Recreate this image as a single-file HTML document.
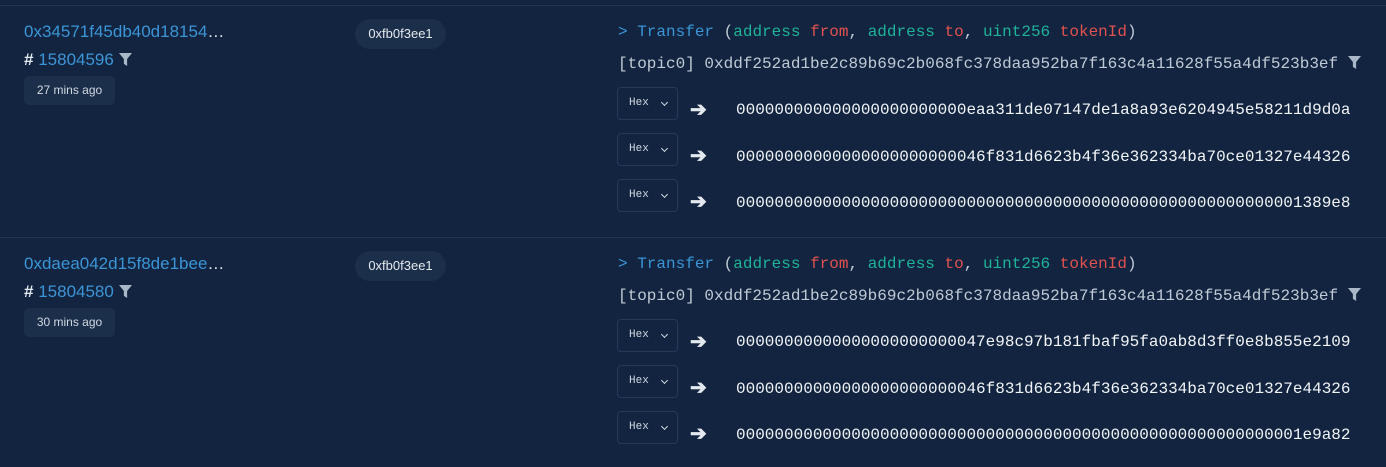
<!DOCTYPE html>
<html><head><meta charset="utf-8"><style>
*{margin:0;padding:0;box-sizing:border-box}
body{width:1386px;height:467px;background:#12243f;overflow:hidden;position:relative;font-family:"Liberation Sans",sans-serif;color:#e4e9ef}
.sep{position:absolute;left:0;width:1386px;height:1px;background:#1f3553}
.abs{position:absolute;white-space:nowrap}
.link{color:#3b95d6;font-size:17px}
.pill{position:absolute;background:#1c2f4a;border-radius:15px;font-size:13px;color:#e4e9ef;height:30px;line-height:30px;text-align:center}
.ts{position:absolute;background:#1c2f4a;border-radius:5px;font-size:12px;color:#d0d8e2;width:91px;height:29px;line-height:29px;text-align:center}
.mono{font-family:"Liberation Mono",monospace;font-size:16px}
.hexb{position:absolute;left:617px;width:61px;height:33px;border:1px solid #25395a;border-radius:4px;font-family:"Liberation Mono",monospace;font-size:11px;color:#d0d8e2;line-height:31px;padding-left:11px}
.hexb:after{content:"";position:absolute;left:44px;top:12px;width:4px;height:4px;border-right:1.5px solid #d0d8e2;border-bottom:1.5px solid #d0d8e2;transform:rotate(45deg)}
.c1{color:#3b95d6}.c2{color:#1fb39a}.c3{color:#e0524f}.c0{color:#c0cad6}
.d{color:#f2f5f8}
</style></head><body>
<div class="sep" style="top:5px"></div>
<div class="sep" style="top:237px"></div>

<div class="abs link" style="left:24px;top:22px">0x34571f45db40d18154<span style="color:#e4e9ef">…</span></div>
<div class="abs" style="left:24px;top:50px;font-size:17px"><b>#</b> <span class="link">15804596</span> <svg width="13" height="13" viewBox="0 0 12 12" style="vertical-align:-1px"><path d="M0 0H12L7.5 5.5V12L4.5 10V5.5Z" fill="#a9b7c8"/></svg></div>
<div class="ts" style="left:24px;top:76px">27 mins ago</div>
<div class="pill" style="left:355px;top:19px;width:91px">0xfb0f3ee1</div>
<div class="abs mono" style="left:618px;top:23px"><span class="c1">&gt; Transfer</span> <span class="c0">(</span><span class="c2">address</span> <span class="c3">from</span><span class="c0">,</span> <span class="c2">address</span> <span class="c3">to</span><span class="c0">,</span> <span class="c2">uint256</span> <span class="c3">tokenId</span><span class="c0">)</span></div>
<div class="abs mono c0" style="left:618px;top:55px">[topic0] 0xddf252ad1be2c89b69c2b068fc378daa952ba7f163c4a11628f55a4df523b3ef <svg width="13" height="13" viewBox="0 0 12 12" style="vertical-align:-1px"><path d="M0 0H12L7.5 5.5V12L4.5 10V5.5Z" fill="#a9b7c8"/></svg></div>
<div class="hexb" style="top:87px">Hex</div>
<div class="hexb" style="top:133px">Hex</div>
<div class="hexb" style="top:179px">Hex</div>
<div class="abs" style="left:690px;top:97px;font-size:20px;font-weight:bold">➔</div>
<div class="abs" style="left:690px;top:143px;font-size:20px;font-weight:bold">➔</div>
<div class="abs" style="left:690px;top:189px;font-size:20px;font-weight:bold">➔</div>
<div class="abs mono d" style="left:736px;top:101px">000000000000000000000000eaa311de07147de1a8a93e6204945e58211d9d0a</div>
<div class="abs mono d" style="left:736px;top:148px">00000000000000000000000046f831d6623b4f36e362334ba70ce01327e44326</div>
<div class="abs mono d" style="left:736px;top:194px">00000000000000000000000000000000000000000000000000000000001389e8</div>

<div class="abs link" style="left:24px;top:254px">0xdaea042d15f8de1bee<span style="color:#e4e9ef">…</span></div>
<div class="abs" style="left:24px;top:282px;font-size:17px"><b>#</b> <span class="link">15804580</span> <svg width="13" height="13" viewBox="0 0 12 12" style="vertical-align:-1px"><path d="M0 0H12L7.5 5.5V12L4.5 10V5.5Z" fill="#a9b7c8"/></svg></div>
<div class="ts" style="left:24px;top:308px">30 mins ago</div>
<div class="pill" style="left:355px;top:251px;width:91px">0xfb0f3ee1</div>
<div class="abs mono" style="left:618px;top:255px"><span class="c1">&gt; Transfer</span> <span class="c0">(</span><span class="c2">address</span> <span class="c3">from</span><span class="c0">,</span> <span class="c2">address</span> <span class="c3">to</span><span class="c0">,</span> <span class="c2">uint256</span> <span class="c3">tokenId</span><span class="c0">)</span></div>
<div class="abs mono c0" style="left:618px;top:287px">[topic0] 0xddf252ad1be2c89b69c2b068fc378daa952ba7f163c4a11628f55a4df523b3ef <svg width="13" height="13" viewBox="0 0 12 12" style="vertical-align:-1px"><path d="M0 0H12L7.5 5.5V12L4.5 10V5.5Z" fill="#a9b7c8"/></svg></div>
<div class="hexb" style="top:319px">Hex</div>
<div class="hexb" style="top:365px">Hex</div>
<div class="hexb" style="top:411px">Hex</div>
<div class="abs" style="left:690px;top:329px;font-size:20px;font-weight:bold">➔</div>
<div class="abs" style="left:690px;top:375px;font-size:20px;font-weight:bold">➔</div>
<div class="abs" style="left:690px;top:421px;font-size:20px;font-weight:bold">➔</div>
<div class="abs mono d" style="left:736px;top:333px">00000000000000000000000047e98c97b181fbaf95fa0ab8d3ff0e8b855e2109</div>
<div class="abs mono d" style="left:736px;top:380px">00000000000000000000000046f831d6623b4f36e362334ba70ce01327e44326</div>
<div class="abs mono d" style="left:736px;top:426px">00000000000000000000000000000000000000000000000000000000001e9a82</div>
</body></html>
